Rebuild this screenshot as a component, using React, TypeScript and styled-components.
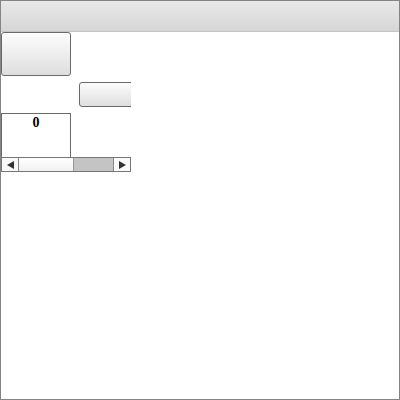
import React from "react";
import styled, { createGlobalStyle } from "styled-components";

const Global = createGlobalStyle`
  html, body { margin: 0; padding: 0; background: #fff; }
  body { font-family: "Liberation Sans", Arial, sans-serif; }
`;

const Frame = styled.div`
  box-sizing: border-box;
  width: 400px;
  height: 400px;
  border: 1px solid #858585;
  background: #fff;
  display: flex;
  flex-direction: column;
`;

const TitleBar = styled.div`
  height: 30px;
  flex: none;
  background: linear-gradient(#e9e9e9, #d6d6d6);
  border-bottom: 1px solid #c4c4c4;
`;

const Panel = styled.div`
  width: 130px;
  overflow: hidden;
  display: flex;
  flex-direction: column;
`;

const Button = styled.div<{ $w: number; $h: number; $ml?: number; $mt?: number }>`
  box-sizing: border-box;
  flex: none;
  width: ${(p) => p.$w}px;
  height: ${(p) => p.$h}px;
  margin-left: ${(p) => p.$ml ?? 0}px;
  margin-top: ${(p) => p.$mt ?? 0}px;
  border: 1px solid #6a6a6a;
  border-radius: 3px;
  background: linear-gradient(#fdfdfd, #dedede);
`;

const Counter = styled.div`
  box-sizing: border-box;
  width: 70px;
  height: 44px;
  margin-top: 6px;
  border: 1px solid #6a6a6a;
  border-bottom: none;
  text-align: center;
  font-family: "Liberation Serif", serif;
  font-size: 14px;
  font-weight: bold;
  line-height: 14px;
  padding-top: 2px;
  color: #000;
`;

const ScrollBar = styled.div`
  box-sizing: border-box;
  width: 130px;
  height: 15px;
  border: 1px solid #777;
  display: flex;
  background: #fff;
`;

const Arrow = styled.div<{ $dir: "left" | "right" }>`
  box-sizing: border-box;
  width: 17px;
  flex: none;
  display: flex;
  align-items: center;
  justify-content: center;
  background: #fafafa;
  ${(p) => (p.$dir === "left" ? "border-right: 1px solid #888;" : "border-left: 1px solid #888;")}
  &::before {
    content: "";
    width: 0;
    height: 0;
    border-top: 4px solid transparent;
    border-bottom: 4px solid transparent;
    ${(p) =>
      p.$dir === "left"
        ? "border-right: 7px solid #333;"
        : "border-left: 7px solid #333;"}
  }
`;

const Track = styled.div`
  flex: 1;
  display: flex;
  background: linear-gradient(#fff, #f1f1f1);
`;

const Thumb = styled.div`
  box-sizing: border-box;
  width: 40px;
  margin-left: auto;
  background: #c4c4c4;
  border-left: 1px solid #999;
`;

export default function App() {
  return (
    <>
      <Global />
      <Frame>
        <TitleBar />
        <Panel>
          <Button $w={70} $h={44} />
          <Button $w={70} $h={25} $ml={78} $mt={6} />
          <Counter>0</Counter>
          <ScrollBar>
            <Arrow $dir="left" />
            <Track>
              <Thumb />
            </Track>
            <Arrow $dir="right" />
          </ScrollBar>
        </Panel>
      </Frame>
    </>
  );
}
